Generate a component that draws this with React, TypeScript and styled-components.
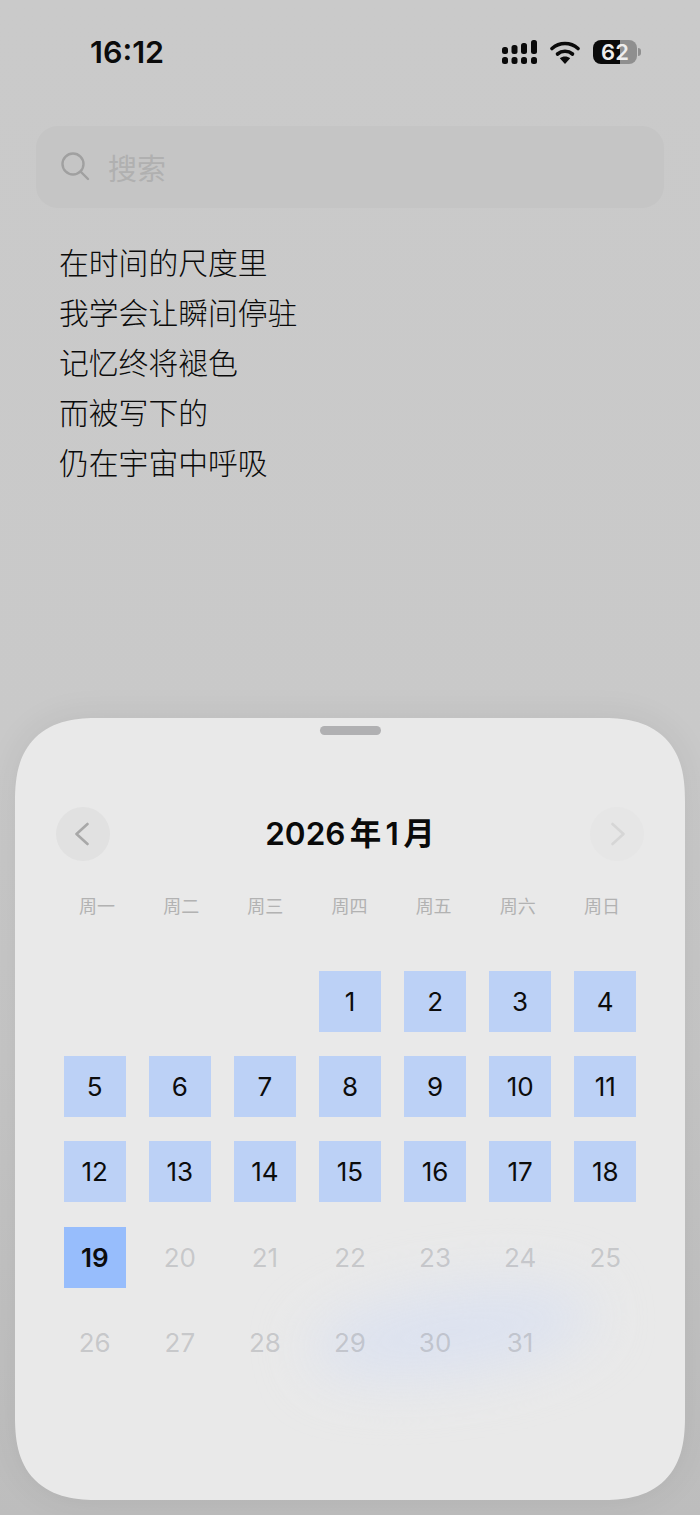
import React from "react"
import styled, { createGlobalStyle } from "styled-components"

const GlobalStyle = createGlobalStyle`
  html, body {
    margin: 0;
    padding: 0;
    background: #c9c9c9;
  }
  body {
    font-family: "Inter", "Noto Sans CJK SC", sans-serif;
    overflow: hidden;
  }
`

const Page = styled.div`
  width: 700px;
  height: 1515px;
  display: flex;
  flex-direction: column;
  background: linear-gradient(180deg, #cacaca 0%, #c9c9c9 50%, #c6c6c6 70%, #bdbdbd 100%);
`

const StatusBar = styled.div`
  height: 126px;
  box-sizing: border-box;
  padding: 37px 63px 0 90px;
  display: flex;
  justify-content: space-between;
  align-items: flex-start;
  flex-shrink: 0;
`

const Time = styled.div`
  font-size: 30.5px;
  font-weight: 600;
  line-height: 30px;
  color: #0b0b0b;
`

const StatusIcons = styled.div`
  display: flex;
  align-items: center;
  gap: 13px;
  margin-top: 3px;
`

const Battery = styled.div`
  position: relative;
  width: 44px;
  height: 24px;
  border-radius: 8px;
  overflow: hidden;
  background: linear-gradient(90deg, #0a0a0a 0 61%, #8f8f8f 61% 100%);
  color: #eeeeee;
  font-size: 22px;
  font-weight: 600;
  line-height: 24px;
  text-align: center;
`

const BatteryCap = styled.div`
  position: absolute;
  left: 638px;
  top: 48px;
  width: 3px;
  height: 8px;
  border-radius: 0 3px 3px 0;
  background: #8f8f8f;
`

const SearchBar = styled.div`
  margin: 0 36px;
  height: 82px;
  flex-shrink: 0;
  border-radius: 22px;
  background: #c5c5c5;
  display: flex;
  align-items: center;
  gap: 17px;
  padding-left: 25px;
`

const SearchText = styled.span`
  font-family: "Noto Sans CJK SC", sans-serif;
  font-size: 29px;
  color: #b0b0b0;
`

const Poem = styled.div`
  margin: 28px 0 0 59px;
  font-family: "Noto Sans CJK SC", sans-serif;
  font-size: 29.8px;
  font-weight: 300;
  line-height: 50px;
  color: #0a0a0a;
`

const Sheet = styled.div`
  position: relative;
  overflow: hidden;
  margin: auto 15px 15px;
  height: 782px;
  flex-shrink: 0;
  box-sizing: border-box;
  border-radius: 84px;
  corner-shape: superellipse(1.35);
  padding-top: 8px;
  display: flex;
  flex-direction: column;
  align-items: center;
  background: #e9e9e9;
  box-shadow: 0 0 36px rgba(0, 0, 0, 0.07);

  &::before {
    content: "";
    position: absolute;
    left: 295px;
    top: 572px;
    width: 285px;
    height: 84px;
    border-radius: 50%;
    background: #dce2f0;
    filter: blur(28px);
    transform: rotate(-8deg);
  }
`

const Handle = styled.div`
  width: 61px;
  height: 9px;
  border-radius: 5px;
  background: #b0b0b2;
`

const Header = styled.div`
  position: relative;
  margin-top: 72px;
  width: 588px;
  display: flex;
  justify-content: space-between;
  align-items: center;
`

const NavButton = styled.div<{ $faded?: boolean }>`
  width: 54px;
  height: 54px;
  border-radius: 50%;
  background: ${({ $faded }) => ($faded ? "#e6e6e6" : "#e1e1e1")};
  display: flex;
  align-items: center;
  justify-content: center;
`

const Title = styled.div`
  font-size: 31.5px;
  font-weight: 600;
  color: #0a0a0a;
  line-height: 54px;
  word-spacing: -3.6px;
`

const Weekdays = styled.div`
  position: relative;
  margin-top: 32px;
  width: 590px;
  display: grid;
  grid-template-columns: repeat(7, 84.15px);
`

const Weekday = styled.div`
  font-family: "Noto Sans CJK SC", sans-serif;
  font-size: 18px;
  line-height: 24px;
  text-align: center;
  color: #b2b2b2;
`

const Days = styled.div`
  position: relative;
  margin-top: 54px;
  width: 572px;
  display: grid;
  grid-template-columns: repeat(7, 61.5px);
  grid-auto-rows: 61px;
  justify-content: space-between;
  row-gap: 24.2px;
`

const Day = styled.div<{ $kind: "past" | "today" | "future" }>`
  display: flex;
  align-items: center;
  justify-content: center;
  font-size: 26px;
  font-weight: ${({ $kind }) => ($kind === "today" ? 600 : 400)};
  color: ${({ $kind }) => ($kind === "future" ? "rgba(150, 152, 158, 0.42)" : "#0c0c0c")};
  background: ${({ $kind }) =>
    $kind === "past" ? "#bcd1f6" : $kind === "today" ? "#97bdfc" : "transparent"};
`

const weekdays = ["周一", "周二", "周三", "周四", "周五", "周六", "周日"]
const poem = ["在时间的尺度里", "我学会让瞬间停驻", "记忆终将褪色", "而被写下的", "仍在宇宙中呼吸"]
const today = 19

const SignalIcon = () => (
  <svg width="35" height="24" viewBox="0 0 35 24" fill="#0a0a0a">
    <rect x="0" y="7" width="6" height="7" rx="2.5" />
    <rect x="0" y="17" width="6" height="7" rx="2.5" />
    <rect x="9.5" y="5" width="6" height="9" rx="2.5" />
    <rect x="9.5" y="17" width="6" height="7" rx="2.5" />
    <rect x="19" y="3" width="6" height="11" rx="2.5" />
    <rect x="19" y="17" width="6" height="7" rx="2.5" />
    <rect x="29" y="0" width="6" height="14" rx="2.5" />
    <rect x="29" y="17" width="6" height="7" rx="2.5" />
  </svg>
)

const WifiIcon = () => (
  <svg width="30" height="23" viewBox="0 0 30 23" fill="none">
    <path d="M2 7.5C9.5 .8 20.5 .8 28 7.5" stroke="#0a0a0a" strokeWidth="3.6" strokeLinecap="round" />
    <path d="M7.5 13C11.8 9.4 18.2 9.4 22.5 13" stroke="#0a0a0a" strokeWidth="3.6" strokeLinecap="round" />
    <path d="M15 23L9.8 17.2C12.8 14.9 17.2 14.9 20.2 17.2Z" fill="#0a0a0a" />
  </svg>
)

const SearchIcon = () => (
  <svg width="30" height="30" viewBox="0 0 30 30" fill="none" stroke="#a0a0a0" strokeWidth="2.4" strokeLinecap="round">
    <circle cx="12" cy="12" r="10.5" />
    <path d="M19.5 19.5L27 27" />
  </svg>
)

const Chevron = ({ dir, color }: { dir: "left" | "right"; color: string }) => (
  <svg width="16" height="26" viewBox="0 0 16 26" fill="none" stroke={color} strokeWidth="2.6" strokeLinecap="round" strokeLinejoin="round">
    <path d={dir === "left" ? "M12.5 3L1.5 13L12.5 23" : "M3.5 3L14.5 13L3.5 23"} />
  </svg>
)

export default function App() {
  const cells: (number | null)[] = [null, null, null]
  for (let d = 1; d <= 31; d++) cells.push(d)

  return (
    <Page>
      <GlobalStyle />
      <StatusBar>
        <Time>16:12</Time>
        <StatusIcons>
          <SignalIcon />
          <WifiIcon />
          <Battery>62</Battery>
          <BatteryCap />
        </StatusIcons>
      </StatusBar>
      <SearchBar>
        <SearchIcon />
        <SearchText>搜索</SearchText>
      </SearchBar>
      <Poem>
        {poem.map((line) => (
          <div key={line}>{line}</div>
        ))}
      </Poem>
      <Sheet>
        <Handle />
        <Header>
          <NavButton>
            <Chevron dir="left" color="#a8a8a8" />
          </NavButton>
          <Title>2026 年 1 月</Title>
          <NavButton $faded>
            <Chevron dir="right" color="#d6d6d6" />
          </NavButton>
        </Header>
        <Weekdays>
          {weekdays.map((w) => (
            <Weekday key={w}>{w}</Weekday>
          ))}
        </Weekdays>
        <Days>
          {cells.map((d, i) =>
            d === null ? (
              <div key={`empty-${i}`} />
            ) : (
              <Day key={d} $kind={d < today ? "past" : d === today ? "today" : "future"}>
                {d}
              </Day>
            ),
          )}
        </Days>
      </Sheet>
    </Page>
  )
}
